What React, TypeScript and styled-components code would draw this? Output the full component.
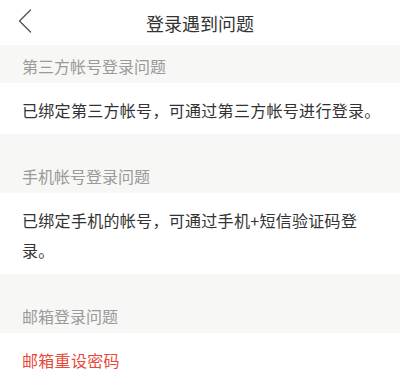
import React, { FC } from "react";
import styled, { createGlobalStyle } from "styled-components";

const GlobalStyle = createGlobalStyle`
    html, body {
        margin: 0;
        padding: 0;
        background: #fff;
    }
    body {
        font-family: "Noto Sans CJK SC", "Noto Sans", sans-serif;
        -webkit-font-smoothing: antialiased;
    }
`

const Page = styled.div`
    width: 400px;
    height: 384px;
    overflow: hidden;
    background: #fff;
`

const Header = styled.div`
    position: relative;
    height: 45px;
    display: flex;
    align-items: center;
    justify-content: center;
    background: #fff;
    & .backButton{
        position: absolute;
        left: 14px;
        top: 7px;
        width: 22px;
        height: 28px;
        display: flex;
        align-items: center;
        justify-content: center;
        cursor: pointer;
    }
    & .headerTitle{
        font-size: 18px;
        line-height: 24px;
        color: #333;
    }
`

const Section = styled.div<{ $first?: boolean }>`
    background: #f7f7f5;
    padding-top: ${p => p.$first ? "0" : "21px"};
`

const SectionTitle = styled.div`
    padding: 11px 22px 7px;
    font-size: 16px;
    line-height: 20px;
    color: #9a9a9a;
`

const SectionBody = styled.div<{ $accent?: boolean }>`
    background: #fff;
    padding: 12px 10px 9px 22px;
    font-size: 16px;
    line-height: 30px;
    letter-spacing: 0.3px;
    white-space: pre-line;
    color: ${p => p.$accent ? "#e8483a" : "#333"};
`

interface ProblemModel {
    title: string,
    text: string,
    isLink?: boolean
}

const problems: ProblemModel[] = [
    { title: "第三方帐号登录问题", text: "已绑定第三方帐号，可通过第三方帐号进行登录。" },
    { title: "手机帐号登录问题", text: "已绑定手机的帐号，可通过手机+短信验证码登\n录。" },
    { title: "邮箱登录问题", text: "邮箱重设密码", isLink: true },
]

const App: FC = () => {
    return <Page>
        <GlobalStyle />
        <Header>
            <span className="backButton">
                <svg width="14" height="24" viewBox="0 0 14 24">
                    <path d="M12.5 1 L1.5 12 L12.5 23" fill="none" stroke="#555" strokeWidth="1.4" strokeLinecap="round" strokeLinejoin="round" />
                </svg>
            </span>
            <span className="headerTitle">登录遇到问题</span>
        </Header>
        {
            problems.map((p, i) => <Section key={p.title} $first={i === 0}>
                <SectionTitle>{p.title}</SectionTitle>
                <SectionBody $accent={p.isLink}>{p.text}</SectionBody>
            </Section>)
        }
    </Page>
}

export default App;
